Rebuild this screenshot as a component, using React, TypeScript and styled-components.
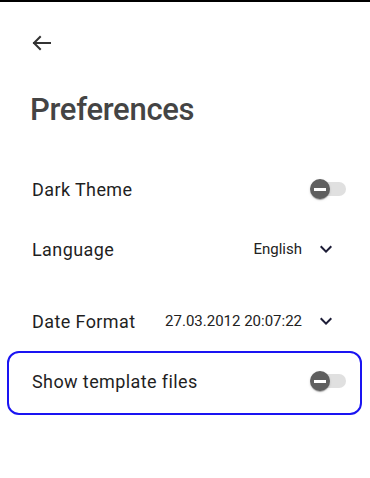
import React from "react";
import styled, { createGlobalStyle } from "styled-components";

const Global = createGlobalStyle`
  html, body { margin: 0; padding: 0; background: #ffffff; }
  body { font-family: Roboto, "Liberation Sans", sans-serif; -webkit-font-smoothing: antialiased; }
  * { box-sizing: border-box; }
`;

const Page = styled.div`
  width: 370px;
  height: 478px;
  border-top: 2px solid #000;
  padding: 28px 8px 0 7px;
  display: flex;
  flex-direction: column;
  background: #fff;
`;

const BackButton = styled.button`
  width: 24px;
  height: 24px;
  margin-left: 23px;
  margin-top: 1px;
  padding: 0;
  border: none;
  background: transparent;
  color: #333;
  display: flex;
  align-items: center;
  justify-content: center;
  cursor: pointer;
`;

const Title = styled.h1`
  margin: 37px 0 0 23px;
  font-size: 31px;
  line-height: 36px;
  font-weight: 500;
  color: #444;
  letter-spacing: -0.3px;
`;

const List = styled.div`
  display: flex;
  flex-direction: column;
  margin-top: 31px;
`;

const Row = styled.div<{ $h: number; $focused?: boolean; $mt?: number }>`
  height: ${(p) => p.$h}px;
  margin-top: ${(p) => p.$mt ?? 0}px;
  border: 2px solid ${(p) => (p.$focused ? "#1a14f2" : "transparent")};
  border-radius: 12px;
  padding: 0 14px ${(p) => (p.$focused ? 4 : 0)}px 23px;
  display: flex;
  align-items: center;
  justify-content: space-between;
`;

const Label = styled.span`
  font-size: 18px;
  color: #1f1f1f;
  letter-spacing: 0.4px;
`;

const Select = styled.div`
  display: flex;
  align-items: center;
  gap: 12px;
  margin-right: 8px;
`;

const Value = styled.span`
  font-size: 15px;
  color: #222;
  letter-spacing: 0;
`;

const Chevron = styled.svg`
  width: 24px;
  height: 24px;
  display: block;
  fill: #1c1c36;
`;

const SwitchRoot = styled.div`
  position: relative;
  width: 36px;
  height: 20px;
  flex: none;
`;

const Track = styled.div`
  position: absolute;
  left: 2px;
  right: 0;
  top: 3px;
  height: 14px;
  border-radius: 7px;
  background: #e0e0e0;
`;

const Thumb = styled.div`
  position: absolute;
  left: 0;
  top: 0;
  width: 20px;
  height: 20px;
  border-radius: 50%;
  background: #5f5f5f;
  box-shadow: 0 2px 1px -1px rgba(0,0,0,0.2), 0 1px 1px 0 rgba(0,0,0,0.14), 0 1px 3px 0 rgba(0,0,0,0.12);
  display: flex;
  align-items: center;
  justify-content: center;
`;

const Minus = styled.div`
  width: 12px;
  height: 3px;
  background: #fff;
`;

const Toggle = () => (
  <SwitchRoot>
    <Track />
    <Thumb>
      <Minus />
    </Thumb>
  </SwitchRoot>
);

const ExpandMore = () => (
  <Chevron viewBox="0 0 24 24">
    <path d="M16.59 8.59 12 13.17 7.41 8.59 6 10l6 6 6-6z" />
  </Chevron>
);

export default function App() {
  return (
    <>
      <Global />
      <Page>
        <BackButton aria-label="back">
          <svg width="24" height="24" viewBox="0 0 24 24" fill="none" stroke="#333" strokeWidth="2" strokeLinecap="square">
            <path d="M4 12h16" />
            <path d="M10 6l-6 6 6 6" />
          </svg>
        </BackButton>
        <Title>Preferences</Title>
        <List>
          <Row $h={60}>
            <Label>Dark Theme</Label>
            <Toggle />
          </Row>
          <Row $h={60}>
            <Label>Language</Label>
            <Select>
              <Value>English</Value>
              <ExpandMore />
            </Select>
          </Row>
          <Row $h={60} $mt={12}>
            <Label>Date Format</Label>
            <Select>
              <Value>27.03.2012 20:07:22</Value>
              <ExpandMore />
            </Select>
          </Row>
          <Row $h={64} $focused>
            <Label>Show template files</Label>
            <Toggle />
          </Row>
        </List>
      </Page>
    </>
  );
}
